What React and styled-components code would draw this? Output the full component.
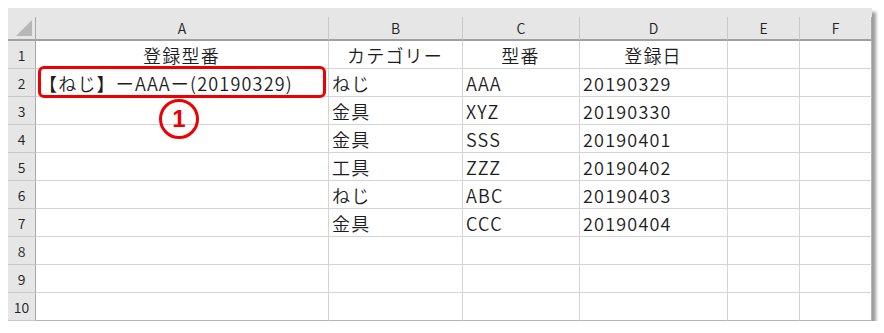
import { Fragment } from "react"
import styled, { createGlobalStyle } from "styled-components"

const GlobalStyle = createGlobalStyle`
  body {
    margin: 0;
    background: #ffffff;
    font-family: "Noto Sans CJK JP", "Noto Sans", sans-serif;
  }
`

// column widths in px: row number column, then A..F
const COLS = [28, 293, 134, 117, 148, 72, 72]
const LETTERS = ["A", "B", "C", "D", "E", "F"]

const rows = [
  ["登録型番", "カテゴリー", "型番", "登録日", "", ""],
  ["【ねじ】ーAAAー(20190329)", "ねじ", "AAA", "20190329", "", ""],
  ["", "金具", "XYZ", "20190330", "", ""],
  ["", "金具", "SSS", "20190401", "", ""],
  ["", "工具", "ZZZ", "20190402", "", ""],
  ["", "ねじ", "ABC", "20190403", "", ""],
  ["", "金具", "CCC", "20190404", "", ""],
  ["", "", "", "", "", ""],
  ["", "", "", "", "", ""],
  ["", "", "", "", "", ""],
]

const Sheet = styled.div`
  position: relative;
  margin: 8px 0 0 8px;
  width: ${COLS.reduce((a, b) => a + b, 0)}px;
  background: #ffffff;
  box-shadow: 4px 4px 3px rgba(0, 0, 0, 0.38);
`

const Grid = styled.div`
  display: grid;
  grid-template-columns: ${COLS.map((c) => c + "px").join(" ")};
`

const HeaderStrip = styled.div`
  grid-column: 1 / -1;
  height: 9px;
  background: #e6e6e6;
`

const Corner = styled.div`
  position: relative;
  height: 24px;
  box-sizing: border-box;
  background: #e6e6e6;
  border-right: 1px solid #a9a9a9;
  border-bottom: 2px solid #a0a0a0;

  &::after {
    content: "";
    position: absolute;
    right: 3px;
    bottom: 3px;
    width: 0;
    height: 0;
    border-left: 16px solid transparent;
    border-bottom: 16px solid #b7b7b7;
  }
`

const ColHead = styled.div`
  height: 24px;
  box-sizing: border-box;
  display: flex;
  align-items: center;
  justify-content: center;
  background: #e6e6e6;
  border-right: 1px solid ${(p) => (p.$last ? "#a9a9a9" : "#c8c8c8")};
  border-bottom: 2px solid #a0a0a0;
  font-size: 14px;
  font-weight: 350;
  color: #222222;
`

const RowHead = styled.div`
  height: 28px;
  box-sizing: border-box;
  display: flex;
  align-items: center;
  justify-content: center;
  background: #e6e6e6;
  border-right: 1px solid #a9a9a9;
  border-bottom: 1px solid #c8c8c8;
  font-size: 14px;
  font-weight: 350;
  color: #222222;
`

const Cell = styled.div`
  height: 28px;
  box-sizing: border-box;
  display: flex;
  align-items: center;
  justify-content: ${(p) => (p.$center ? "center" : "flex-start")};
  padding: 1px 4px 0 3px;
  border-right: 1px solid ${(p) => (p.$last ? "#b5b5b5" : "#d4d4d4")};
  border-bottom: 1px solid ${(p) => (p.$bottom ? "#b5b5b5" : "#d4d4d4")};
  font-size: 18px;
  font-weight: 350;
  color: #1c1c1c;
  white-space: nowrap;
  letter-spacing: 1.2px;
`

const Highlight = styled.div`
  position: absolute;
  left: 30px;
  top: 58px;
  width: 288px;
  height: 32px;
  box-sizing: border-box;
  border: 3px solid #ee0000;
  border-radius: 6px;
`

const Marker = styled.div`
  position: absolute;
  left: 151px;
  top: 91px;
  width: 40px;
  height: 40px;
  box-sizing: border-box;
  border: 3px solid #ee0000;
  border-radius: 50%;
  display: flex;
  align-items: center;
  justify-content: center;
  color: #ee0000;
  font-family: "Liberation Sans", sans-serif;
  font-weight: bold;
  font-size: 24px;
`

export default function App() {
  return (
    <>
      <GlobalStyle />
      <Sheet>
        <Grid>
          <HeaderStrip />
          <Corner />
          {LETTERS.map((l, i) => (
            <ColHead key={l} $last={i === LETTERS.length - 1}>
              {l}
            </ColHead>
          ))}
          {rows.map((row, r) => (
            <Fragment key={r}>
              <RowHead>{r + 1}</RowHead>
              {row.map((v, c) => (
                <Cell
                  key={c}
                  $center={r === 0}
                  $last={c === row.length - 1}
                  $bottom={r === rows.length - 1}
                >
                  {v}
                </Cell>
              ))}
            </Fragment>
          ))}
        </Grid>
        <Highlight />
        <Marker>1</Marker>
      </Sheet>
    </>
  )
}
